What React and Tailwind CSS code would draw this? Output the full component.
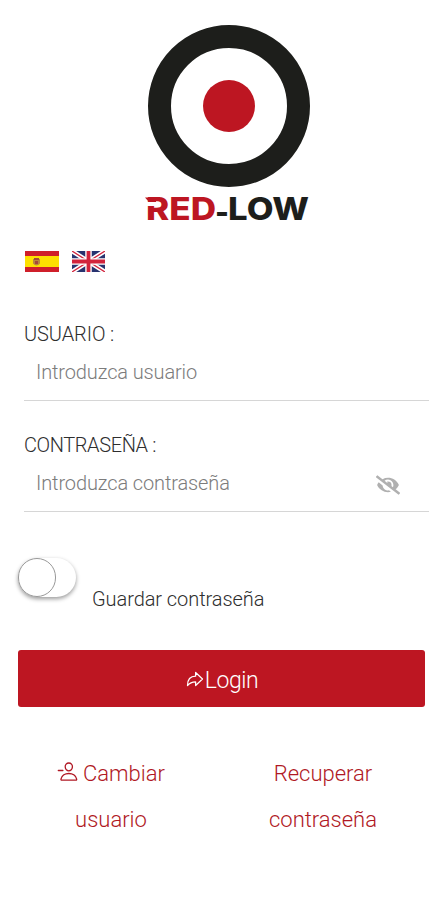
import React, { useState } from 'react';
import { IoArrowRedoOutline, IoPersonRemoveOutline } from 'react-icons/io5';
import { FaEye, FaEyeSlash } from 'react-icons/fa';

function Logo() {
  return (
    <div className="flex flex-col items-center pl-[9px]">
      <div className="w-[162px] h-[162px] rounded-full border-[23px] border-[#1d1e1b] flex items-center justify-center">
        <div className="w-[52px] h-[52px] rounded-full bg-[#bd1622]" />
      </div>
      <svg width="190" height="44" viewBox="-10 -4 190 44" className="-ml-1 overflow-visible font-['Inter',sans-serif]">
        <text x="4" y="29" fontSize="31" fontWeight="800" fill="#bd1622" textLength="70" lengthAdjust="spacingAndGlyphs">RED</text>
        <text x="73" y="32" fontSize="31" fontWeight="800" fill="#1d1e1b" textLength="14" lengthAdjust="spacingAndGlyphs">-</text>
        <text x="86" y="29" fontSize="31" fontWeight="800" fill="#1d1e1b" textLength="81" lengthAdjust="spacingAndGlyphs">LOW</text>
        {/* cut and spur on the R */}
        <path d="M3 11h10v4H3z" fill="#fff" />
        <path d="M3 6.500h11v4.500H7z" fill="#bd1622" />
      </svg>
    </div>
  );
}

function SpainFlag() {
  return (
    <svg width="34" height="21" viewBox="0 0 34 21">
      <path d="M0 0h34v21H0z" fill="#cf1f2a" />
      <path d="M0 5h34v11H0z" fill="#fde000" />
      <path d="M8 8h7v4.500q-3.500 4-7 0z" fill="#b98a3c" />
      <path d="M9 7h5v2H9zM10 10h3v3h-3z" fill="#a5483a" />
    </svg>
  );
}

function UkFlag() {
  return (
    <svg width="33" height="21" viewBox="0 0 33 21">
      <path d="M0 0h33v21H0z" fill="#28336f" />
      <path d="M0 0l33 21M33 0L0 21" stroke="#fff" strokeWidth="4.500" />
      <path d="M0 0l33 21M33 0L0 21" stroke="#d2233c" strokeWidth="1.300" />
      <path d="M16.500 0v21M0 10.500h33" stroke="#fff" strokeWidth="6.500" />
      <path d="M16.500 0v21M0 10.500h33" stroke="#d2233c" strokeWidth="3.800" />
    </svg>
  );
}

function Field({ label, labelClass, children }) {
  return (
    <div className="h-[111px]">
      <label className={`block text-[20px] leading-[30px] text-[#2e2e2e] ${labelClass}`}>{label}</label>
      <div className="h-[52px] mr-[-5px] pl-3 flex items-center border-b-[1.500px] border-[#d6d6d6]">{children}</div>
    </div>
  );
}

export default function App() {
  const [showPass, setShowPass] = useState(false);
  const [remember, setRemember] = useState(false);

  return (
    <div className="w-full h-[900px] bg-white overflow-hidden pt-[25px] font-['Roboto',sans-serif] font-light">
      <Logo />

      <div className="px-6 mt-[20px] pl-[25px] flex gap-[13px]">
        <button type="button"><SpainFlag /></button>
        <button type="button"><UkFlag /></button>
      </div>

      <form className="pt-[47px]" onSubmit={(e) => e.preventDefault()}>
        <div className="px-6">
          <Field label="USUARIO :" labelClass="tracking-[-0.1px]">
            <input
              className="w-full bg-transparent outline-none text-[20px] tracking-[-0.13px] text-[#2e2e2e] placeholder:text-[#7c7c7c] mb-[5px]"
              placeholder="Introduzca usuario"
            />
          </Field>
          <Field label="CONTRASEÑA :" labelClass="tracking-[-0.4px]">
            <input
              type={showPass ? 'text' : 'password'}
              className="flex-1 min-w-0 bg-transparent outline-none text-[20px] tracking-[-0.12px] text-[#2e2e2e] placeholder:text-[#7c7c7c] mb-[5px]"
              placeholder="Introduzca contraseña"
            />
            <button type="button" className="mr-[29px] mb-[2px] text-[#b0b0b0]" onClick={() => setShowPass(!showPass)}>
              {showPass ? <FaEye size={24} /> : <FaEyeSlash size={24} />}
            </button>
          </Field>
        </div>

        <div className="flex px-[18px] mt-[17px]">
          <button
            type="button"
            className={`w-[58px] h-[39px] rounded-full flex shadow-[0_2px_4px_rgba(0,0,0,0.4)] ${remember ? 'bg-[#bd1622] justify-end' : 'bg-white'}`}
            onClick={() => setRemember(!remember)}
          >
            <span className="w-[38px] h-[39px] rounded-full bg-white border border-[#999]" />
          </button>
          <span className="ml-[16px] mt-[26px] text-[20px] leading-[30px] tracking-[-0.07px] text-[#2e2e2e]">Guardar contraseña</span>
        </div>

        <button
          type="submit"
          className="ml-[18px] mt-[36px] w-[407px] h-[57px] rounded-[3px] bg-[#bd1622] text-white text-[23px] tracking-[-0.4px] flex items-center justify-center pt-[5px]"
        >
          <IoArrowRedoOutline size={20} className="mb-[5px]" />
          Login
        </button>
      </form>

      <div className="flex mt-[44px] px-[5px] text-center text-[22px] leading-[46px] text-[#b01824]">
        <a className="w-[212px]">
          <IoPersonRemoveOutline size={21} className="inline mr-[5px] mb-[8px]" />
          Cambiar
          <br />
          usuario
        </a>
        <a className="w-[212px]">
          Recuperar
          <br />
          contraseña
        </a>
      </div>
    </div>
  );
}
